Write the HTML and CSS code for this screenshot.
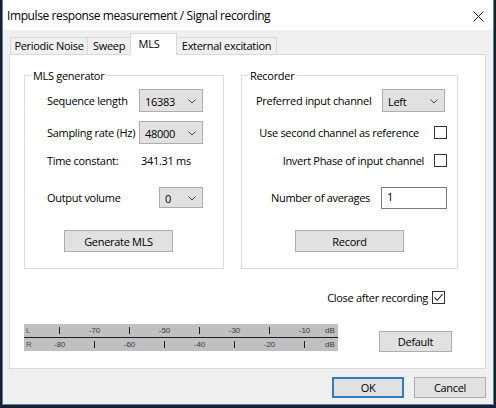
FILE: index.html
```html
<!DOCTYPE html>
<html lang="en">
<head>
    <meta charset="UTF-8">
    <title>Impulse response measurement / Signal recording</title>
    <link rel="stylesheet" href="styles.css">
</head>
<body>

    <div class="window">

        <!-- Title bar -->
        <div class="titlebar">
            <span class="title">Impulse response measurement / Signal recording</span>
            <svg class="close-icon" viewBox="0 0 11 11" width="11" height="11">
                <path d="M0.5 0.5L10.5 10.5M10.5 0.5L0.5 10.5" stroke="#1a1a1a" stroke-width="1" fill="none"/>
            </svg>
        </div>

        <div class="client">

            <!-- Tabs -->
            <div class="tabs">
                <div class="tab tab-noise">Periodic Noise</div>
                <div class="tab tab-sweep">Sweep</div>
                <div class="tab tab-mls active">MLS</div>
                <div class="tab tab-ext">External excitation</div>
            </div>

            <div class="panel">
                <div class="groups">

                    <!-- MLS generator -->
                    <div class="group gen">
                        <span class="group-title">MLS generator</span>
                        <div class="row row-first">
                            <span class="lbl lbl-gen">Sequence length</span>
                            <div class="combo combo-gen">16383
                                <svg class="chev" viewBox="0 0 8 5" width="8" height="5"><path d="M0.5 0.5L4 4L7.5 0.5" stroke="#444" fill="none"/></svg>
                            </div>
                        </div>
                        <div class="row row-next">
                            <span class="lbl lbl-gen">Sampling rate (Hz)</span>
                            <div class="combo combo-gen">48000
                                <svg class="chev" viewBox="0 0 8 5" width="8" height="5"><path d="M0.5 0.5L4 4L7.5 0.5" stroke="#444" fill="none"/></svg>
                            </div>
                        </div>
                        <div class="row row-tight">
                            <span class="lbl lbl-time">Time constant:</span>
                            <span>341.31 ms</span>
                        </div>
                        <div class="row row-wide">
                            <span class="lbl lbl-vol">Output volume</span>
                            <div class="combo combo-vol">0
                                <svg class="chev" viewBox="0 0 8 5" width="8" height="5"><path d="M0.5 0.5L4 4L7.5 0.5" stroke="#444" fill="none"/></svg>
                            </div>
                        </div>
                        <button class="btn btn-generate">Generate MLS</button>
                    </div>

                    <!-- Recorder -->
                    <div class="group rec">
                        <span class="group-title">Recorder</span>
                        <div class="row row-first">
                            <span class="lbl lbl-channel">Preferred input channel</span>
                            <div class="combo combo-rec">Left
                                <svg class="chev" viewBox="0 0 8 5" width="8" height="5"><path d="M0.5 0.5L4 4L7.5 0.5" stroke="#444" fill="none"/></svg>
                            </div>
                        </div>
                        <div class="row row-next check-row">
                            <span class="check-label second">Use second channel as reference</span>
                            <span class="checkbox"></span>
                        </div>
                        <div class="row row-tight check-row">
                            <span class="check-label invert">Invert Phase of input channel</span>
                            <span class="checkbox"></span>
                        </div>
                        <div class="row row-wide avg-row">
                            <span class="lbl lbl-avg">Number of averages</span>
                            <div class="textbox">1</div>
                        </div>
                        <button class="btn btn-record">Record</button>
                    </div>

                </div>

                <div class="close-row">
                    <span class="close-label">Close after recording</span>
                    <span class="checkbox checked">
                        <svg viewBox="0 0 11 11" width="11" height="11"><path d="M1.5 5.5L4.2 8.3L9.6 2.2" stroke="#222" stroke-width="1.1" fill="none"/></svg>
                    </span>
                </div>

                <div class="meter-row">
                    <div class="meter">
                        <div class="meter-line top">
                            <span class="ch">L</span>
                            <span class="tick"></span><span>-70</span>
                            <span class="tick"></span><span>-50</span>
                            <span class="tick"></span><span>-30</span>
                            <span class="tick"></span><span>-10</span>
                            <span>dB</span>
                        </div>
                        <div class="meter-line">
                            <span class="ch">R</span>
                            <span>-80</span><span class="tick"></span>
                            <span>-60</span><span class="tick"></span>
                            <span>-40</span><span class="tick"></span>
                            <span>-20</span><span class="tick"></span>
                            <span>dB</span>
                        </div>
                    </div>
                    <button class="btn btn-default">Default</button>
                </div>
            </div>

            <!-- Dialog buttons -->
            <div class="footer">
                <button class="btn btn-dialog btn-ok">OK</button>
                <button class="btn btn-dialog">Cancel</button>
            </div>

        </div>
    </div>

</body>
</html>
```

FILE: styles.css
```css
/* Global */
* {
    box-sizing: border-box;
}

body {
    margin: 0;
    background-color: #16212f;
    font-family: "Open Sans", "Noto Sans", sans-serif;
    font-size: 11px;
    letter-spacing: -0.3px;
    white-space: nowrap;
    color: #000;
}

.window {
    width: 492px;
    height: 405px;
    margin-left: 2px;
    border: 1px solid #5f82aa;
    border-top: none;
    background-color: #f0f0f0;
    display: flex;
    flex-direction: column;
}

/* Title bar */
.titlebar {
    flex: 0 0 30px;
    background-color: #fff;
    display: flex;
    align-items: center;
    justify-content: space-between;
    padding: 0 9px 0 4px;
    font-size: 12px;
    letter-spacing: -0.4px;
}

.close-icon {
    display: block;
    margin-top: 2px;
}

.client {
    flex: 1;
    padding: 3px 7px 0 6px;
    display: flex;
    flex-direction: column;
}

/* Tabs */
.tabs {
    display: flex;
    align-items: flex-end;
    height: 22px;
    padding-left: 1px;
}

.tab {
    height: 17px;
    margin-bottom: 1px;
    margin-left: -1px;
    border: 1px solid #d9d9d9;
    border-bottom: none;
    background-color: #f0f0f0;
    text-align: center;
    line-height: 16px;
}

.tab-noise { width: 78px; margin-left: 0; }
.tab-sweep { width: 44px; }
.tab-mls { width: 47px; }
.tab-ext { width: 101px; }

.tab.active {
    position: relative;
    z-index: 1;
    height: 22px;
    margin-bottom: 0;
    padding-right: 9px;
    background-color: #fff;
    line-height: 20px;
}

.panel {
    height: 315px;
    margin-top: -1px;
    border: 1px solid #d9d9d9;
    background-color: #fff;
    padding: 20px 26px 0 14px;
}

/* Group boxes */
.groups {
    display: grid;
    grid-template-columns: 200px 217px;
    column-gap: 17px;
}

.group {
    height: 194px;
    border: 1px solid #dcdcdc;
    display: flex;
    flex-direction: column;
    align-items: flex-start;
}

.group-title {
    display: block;
    margin: -8px 0 0 6px;
    padding: 0 2px;
    background-color: #fff;
    line-height: 15px;
}

.row {
    display: flex;
    align-items: center;
    height: 23px;
    width: 100%;
}

.row-first { margin-top: 6px; }
.row-next { margin-top: 9px; }
.row-tight { margin-top: 5px; }
.row-wide { margin-top: 14px; }

.gen .row { padding-left: 22px; }
.rec .row { padding-left: 14px; }

.lbl-gen { width: 92px; }
.lbl-time { width: 94px; }
.lbl-vol { width: 112px; }
.lbl-channel { width: 126px; }
.lbl-avg { width: 110px; }

.rec .avg-row { padding-left: 29px; }

.combo {
    height: 23px;
    display: flex;
    align-items: center;
    justify-content: space-between;
    padding: 1px 6px 0 5px;
    background-color: #e1e1e1;
    border: 1px solid #adadad;
}

.combo-gen { width: 64px; }
.combo-vol { width: 44px; height: 21px; }
.combo-rec { width: 63px; }

.chev {
    display: block;
}

.textbox {
    width: 66px;
    height: 22px;
    border: 1px solid #7a7a7a;
    background-color: #fff;
    padding: 1px 0 0 5px;
    line-height: 16px;
}

/* Check boxes */
.check-row {
    justify-content: flex-end;
}

.rec .check-row {
    padding-right: 10px;
}

.second { margin-right: 15px; }
.invert { margin-right: 10px; }

.checkbox {
    width: 13px;
    height: 13px;
    border: 1px solid #333;
    background-color: #fff;
    display: flex;
    align-items: center;
    justify-content: center;
}

.checkbox svg {
    display: block;
}

/* Buttons */
.btn {
    font-family: inherit;
    font-size: 11px;
    letter-spacing: -0.3px;
    color: #000;
    height: 22px;
    padding: 0;
    background-color: #e1e1e1;
    border: 1px solid #adadad;
}

.btn-generate {
    width: 109px;
    margin: 21px 0 0 39px;
}

.btn-record {
    width: 109px;
    margin: 21px 0 0 53px;
}

.close-row {
    display: flex;
    align-items: center;
    justify-content: flex-end;
    height: 20px;
    margin-top: 18px;
    padding-right: 14px;
}

.close-label {
    margin-right: 4px;
}

/* Level meter */
.meter-row {
    display: flex;
    align-items: flex-start;
    margin-top: 17px;
}

.meter {
    width: 314px;
    background-color: #c0c0c0;
    font-family: "Liberation Sans", Arial, sans-serif;
    font-size: 8px;
    letter-spacing: 0;
    color: #3c3c3c;
}

.meter-line {
    display: grid;
    grid-template-columns: 18px repeat(8, 35px) 1fr;
    align-items: center;
    height: 13px;
}

.meter-line.top {
    height: 14px;
    border-bottom: 1px solid #1e1e1e;
}

.meter-line span {
    text-align: center;
}

.meter-line .ch {
    text-align: left;
    padding-left: 2px;
    color: #555;
}

.meter-line .tick {
    justify-self: center;
    width: 1px;
    height: 7px;
    background-color: #1e1e1e;
}

.btn-default {
    width: 73px;
    height: 21px;
    margin: 7px 0 0 41px;
}

/* Dialog buttons */
.footer {
    display: flex;
    justify-content: flex-end;
    gap: 10px;
    margin-top: 8px;
}

.btn-dialog {
    width: 72px;
    height: 21px;
}

.btn-ok {
    border: 2px solid #2f7cc0;
}
```
